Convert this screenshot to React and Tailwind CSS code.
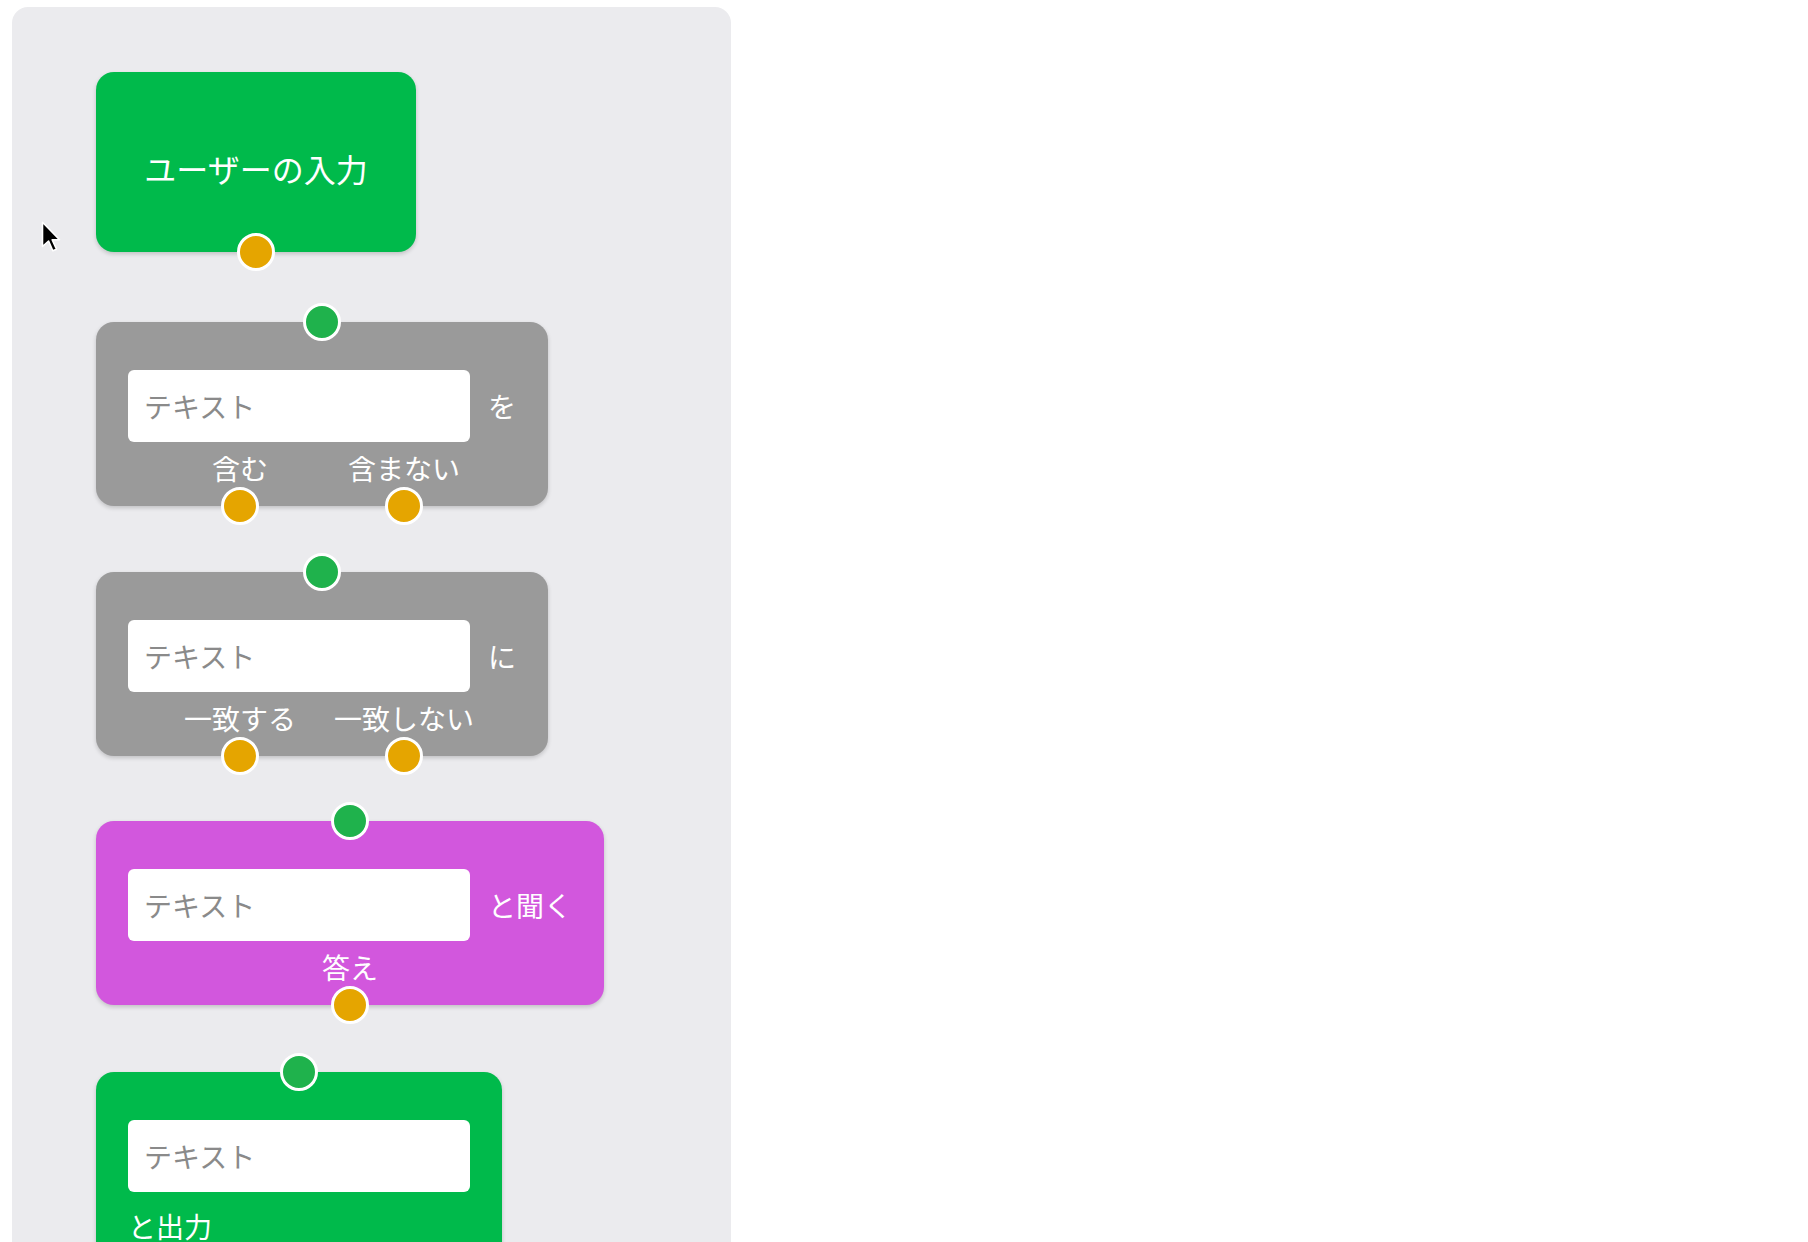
import React from 'react';

const font = { fontFamily: '"Noto Sans CJK JP", "Noto Sans", sans-serif' };

const Port = ({ color, className = '' }) => (
  <div
    className={`w-[38px] h-[38px] rounded-full border-[3px] border-white ${color} ${className}`}
  />
);

const TopPort = () => (
  <div className="absolute -top-[19px] left-1/2 -translate-x-1/2">
    <Port color="bg-[#1fb24c]" />
  </div>
);

const OutPort = () => <Port color="bg-[#e5a500]" className="mt-[3px] -mb-[19px]" />;

const TextInput = () => (
  <input
    type="text"
    placeholder="テキスト"
    className="w-[342px] h-[72px] rounded-[6px] bg-white pl-[16px] text-[28px] text-gray-700 placeholder:text-[#8a8a8a] outline-none"
  />
);

const Output = ({ label, width }) => (
  <div className={`flex flex-col items-center ${width}`}>
    <span className="h-[32px] leading-[32px] text-[28px] text-white whitespace-nowrap">{label}</span>
    <OutPort />
  </div>
);

const BranchNode = ({ suffix, yes, no }) => (
  <div className="relative rounded-[18px] bg-[#9a9a9a] px-8 pt-[48px] shadow-[0_2px_4px_rgba(0,0,0,0.18)]">
    <TopPort />
    <div className="flex items-center gap-[18px]">
      <TextInput />
      <span className="text-[28px] text-white">{suffix}</span>
    </div>
    <div className="mt-[10px] flex justify-center">
      <Output label={yes} width="w-[164px]" />
      <Output label={no} width="w-[164px]" />
    </div>
  </div>
);

const Cursor = () => (
  <svg className="absolute left-[40px] top-[221px]" width="22" height="34" viewBox="0 0 18 28">
    <path
      d="M2 1 L2 21 L7 16.5 L10.5 24.5 L13.5 23.2 L10 15.5 L16 15.5 Z"
      fill="#000"
      stroke="#fff"
      strokeWidth="1.3"
      strokeLinejoin="round"
    />
  </svg>
);

export default function App() {
  return (
    <div className="relative min-h-[1242px] bg-white pl-[12px] pt-[7px]" style={font}>
      <div className="w-[719px] min-h-[1400px] rounded-[16px] bg-[#ebebee] pl-[84px] pt-[65px]">
        <div className="flex flex-col items-start">
          {/* entry */}
          <div className="relative flex h-[180px] w-[320px] flex-col items-center rounded-[18px] bg-[#00ba4b] shadow-[0_2px_4px_rgba(0,0,0,0.18)]">
            <div className="flex flex-1 items-center pt-[30px] text-[32px] text-white">ユーザーの入力</div>
            <Port color="bg-[#e5a500]" className="-mb-[19px]" />
          </div>

          <div className="mt-[70px]">
            <BranchNode suffix="を" yes="含む" no="含まない" />
          </div>

          <div className="mt-[66px]">
            <BranchNode suffix="に" yes="一致する" no="一致しない" />
          </div>

          {/* ask */}
          <div className="relative mt-[65px] rounded-[18px] bg-[#d257dd] px-8 pt-[48px] shadow-[0_2px_4px_rgba(0,0,0,0.18)]">
            <TopPort />
            <div className="flex items-center gap-[18px]">
              <TextInput />
              <span className="text-[28px] text-white">と聞く</span>
            </div>
            <div className="mt-[10px] flex justify-center">
              <Output label="答え" width="w-[164px]" />
            </div>
          </div>

          {/* output */}
          <div className="relative mt-[67px] rounded-[18px] bg-[#00ba4b] px-8 pt-[48px] pb-[40px] shadow-[0_2px_4px_rgba(0,0,0,0.18)]">
            <TopPort />
            <TextInput />
            <div className="mt-[18px] pr-[33px] text-[28px] leading-[32px] text-white">と出力</div>
          </div>
        </div>
      </div>
      <Cursor />
    </div>
  );
}
